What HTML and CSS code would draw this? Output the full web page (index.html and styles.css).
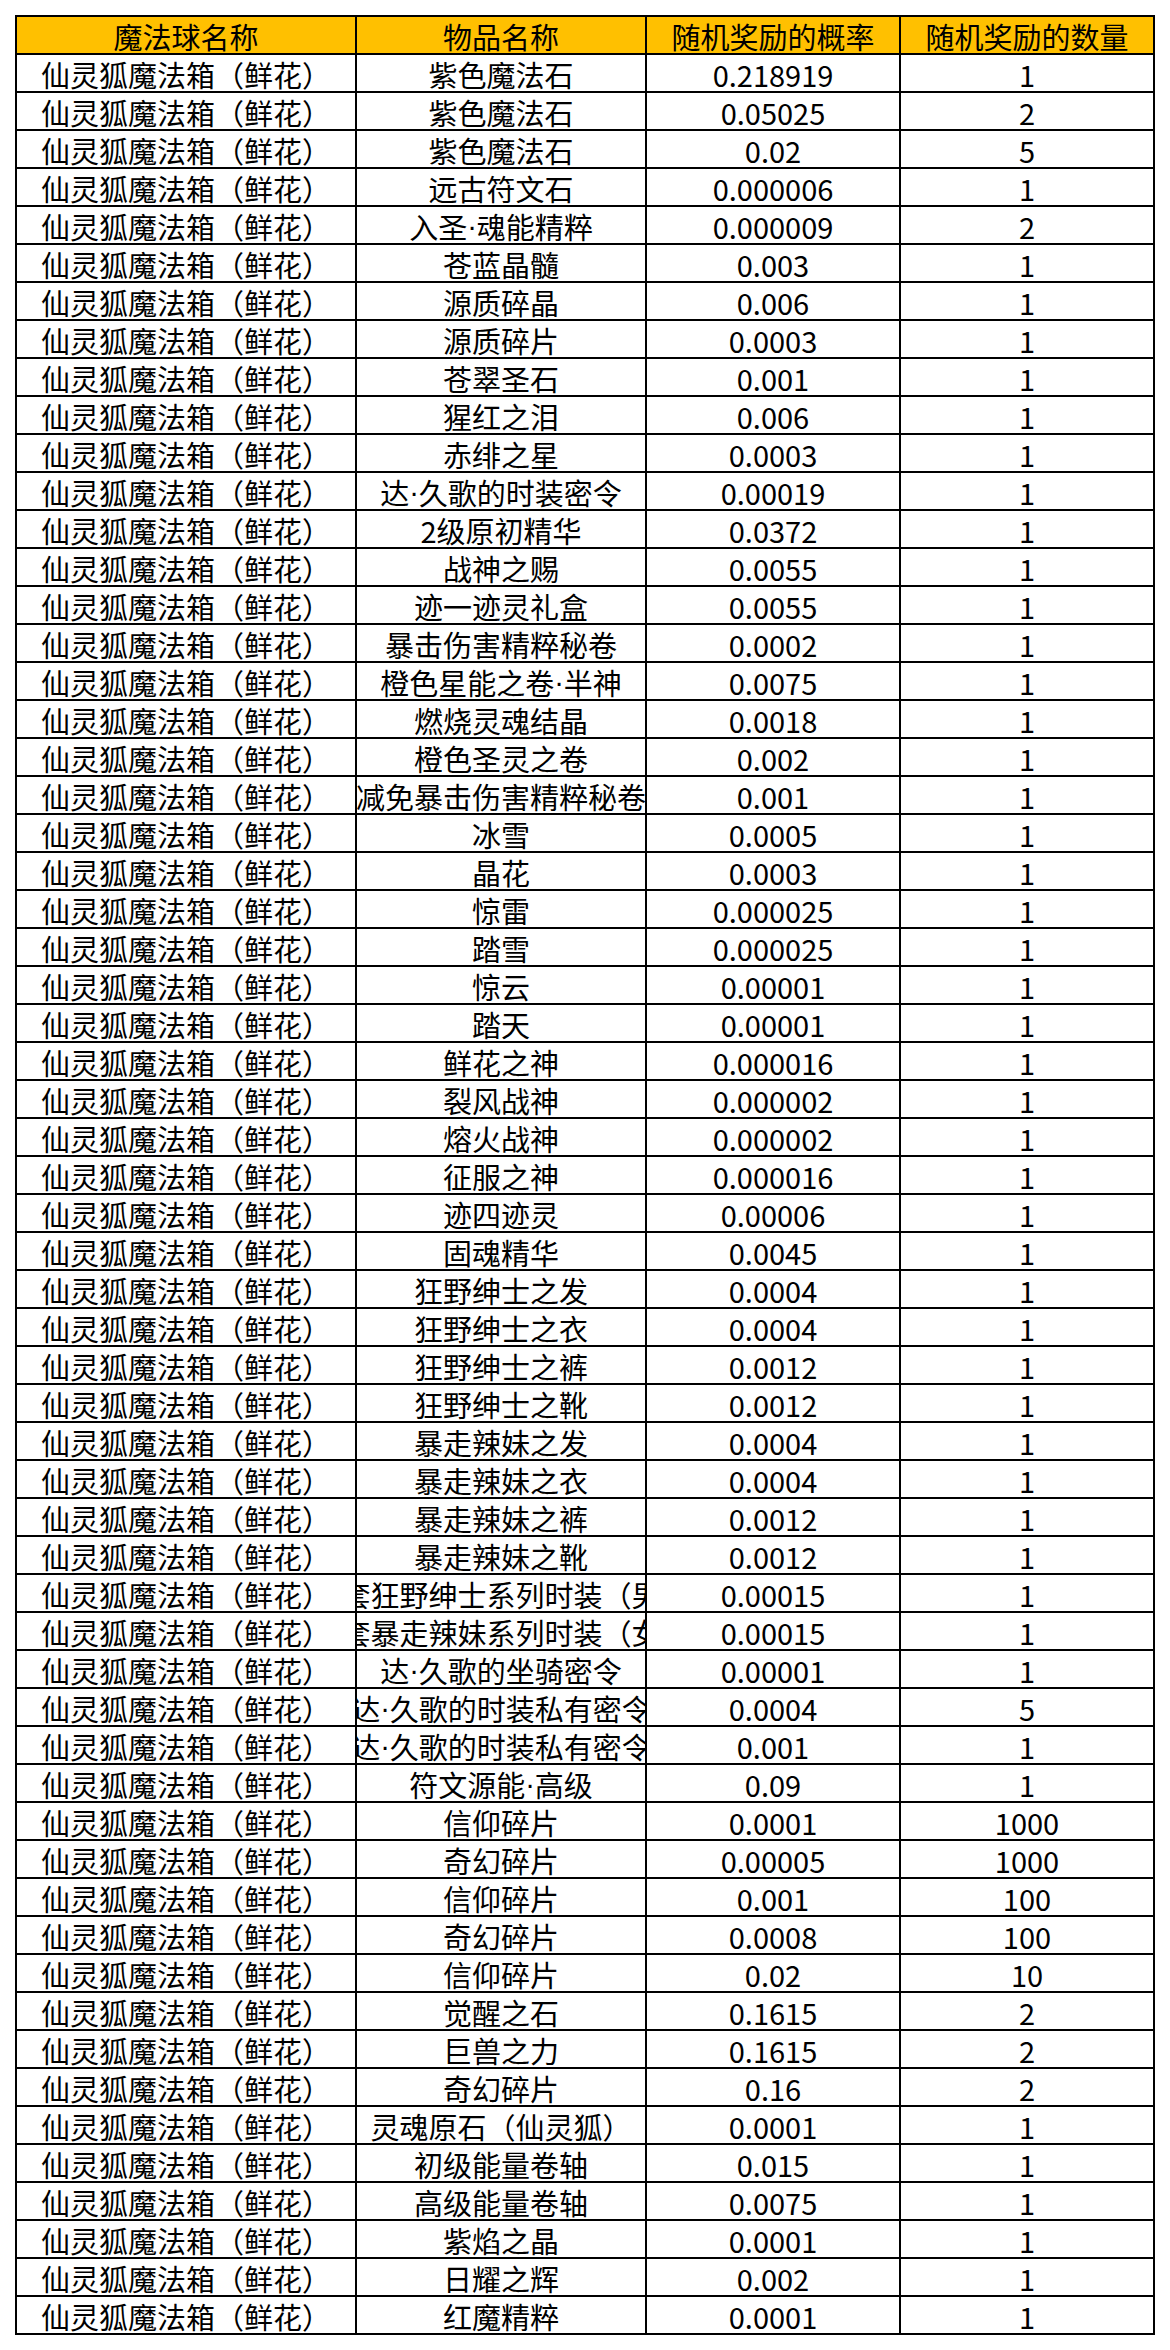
FILE: index.html
```html
<!DOCTYPE html>
<html lang="zh-CN">
<head>
<meta charset="utf-8">
<title>魔法球奖励概率</title>
<link rel="stylesheet" href="styles.css">
</head>
<body>
<table class="sheet">
<colgroup><col class="c1"><col class="c2"><col class="c3"><col class="c4"></colgroup>
<thead>
<tr class="head"><th><div class="cell">魔法球名称</div></th><th><div class="cell">物品名称</div></th><th><div class="cell">随机奖励的概率</div></th><th><div class="cell">随机奖励的数量</div></th></tr>
</thead>
<tbody>
<tr><td><div class="cell">仙灵狐魔法箱（鲜花）</div></td><td><div class="cell">紫色魔法石</div></td><td><div class="cell">0.218919</div></td><td><div class="cell">1</div></td></tr>
<tr><td><div class="cell">仙灵狐魔法箱（鲜花）</div></td><td><div class="cell">紫色魔法石</div></td><td><div class="cell">0.05025</div></td><td><div class="cell">2</div></td></tr>
<tr><td><div class="cell">仙灵狐魔法箱（鲜花）</div></td><td><div class="cell">紫色魔法石</div></td><td><div class="cell">0.02</div></td><td><div class="cell">5</div></td></tr>
<tr><td><div class="cell">仙灵狐魔法箱（鲜花）</div></td><td><div class="cell">远古符文石</div></td><td><div class="cell">0.000006</div></td><td><div class="cell">1</div></td></tr>
<tr><td><div class="cell">仙灵狐魔法箱（鲜花）</div></td><td><div class="cell">入圣<span class="dot">·</span>魂能精粹</div></td><td><div class="cell">0.000009</div></td><td><div class="cell">2</div></td></tr>
<tr><td><div class="cell">仙灵狐魔法箱（鲜花）</div></td><td><div class="cell">苍蓝晶髓</div></td><td><div class="cell">0.003</div></td><td><div class="cell">1</div></td></tr>
<tr><td><div class="cell">仙灵狐魔法箱（鲜花）</div></td><td><div class="cell">源质碎晶</div></td><td><div class="cell">0.006</div></td><td><div class="cell">1</div></td></tr>
<tr><td><div class="cell">仙灵狐魔法箱（鲜花）</div></td><td><div class="cell">源质碎片</div></td><td><div class="cell">0.0003</div></td><td><div class="cell">1</div></td></tr>
<tr><td><div class="cell">仙灵狐魔法箱（鲜花）</div></td><td><div class="cell">苍翠圣石</div></td><td><div class="cell">0.001</div></td><td><div class="cell">1</div></td></tr>
<tr><td><div class="cell">仙灵狐魔法箱（鲜花）</div></td><td><div class="cell">猩红之泪</div></td><td><div class="cell">0.006</div></td><td><div class="cell">1</div></td></tr>
<tr><td><div class="cell">仙灵狐魔法箱（鲜花）</div></td><td><div class="cell">赤绯之星</div></td><td><div class="cell">0.0003</div></td><td><div class="cell">1</div></td></tr>
<tr><td><div class="cell">仙灵狐魔法箱（鲜花）</div></td><td><div class="cell">达<span class="dot">·</span>久歌的时装密令</div></td><td><div class="cell">0.00019</div></td><td><div class="cell">1</div></td></tr>
<tr><td><div class="cell">仙灵狐魔法箱（鲜花）</div></td><td><div class="cell">2级原初精华</div></td><td><div class="cell">0.0372</div></td><td><div class="cell">1</div></td></tr>
<tr><td><div class="cell">仙灵狐魔法箱（鲜花）</div></td><td><div class="cell">战神之赐</div></td><td><div class="cell">0.0055</div></td><td><div class="cell">1</div></td></tr>
<tr><td><div class="cell">仙灵狐魔法箱（鲜花）</div></td><td><div class="cell">迹一迹灵礼盒</div></td><td><div class="cell">0.0055</div></td><td><div class="cell">1</div></td></tr>
<tr><td><div class="cell">仙灵狐魔法箱（鲜花）</div></td><td><div class="cell">暴击伤害精粹秘卷</div></td><td><div class="cell">0.0002</div></td><td><div class="cell">1</div></td></tr>
<tr><td><div class="cell">仙灵狐魔法箱（鲜花）</div></td><td><div class="cell">橙色星能之卷<span class="dot">·</span>半神</div></td><td><div class="cell">0.0075</div></td><td><div class="cell">1</div></td></tr>
<tr><td><div class="cell">仙灵狐魔法箱（鲜花）</div></td><td><div class="cell">燃烧灵魂结晶</div></td><td><div class="cell">0.0018</div></td><td><div class="cell">1</div></td></tr>
<tr><td><div class="cell">仙灵狐魔法箱（鲜花）</div></td><td><div class="cell">橙色圣灵之卷</div></td><td><div class="cell">0.002</div></td><td><div class="cell">1</div></td></tr>
<tr><td><div class="cell">仙灵狐魔法箱（鲜花）</div></td><td><div class="cell over">减免暴击伤害精粹秘卷</div></td><td><div class="cell">0.001</div></td><td><div class="cell">1</div></td></tr>
<tr><td><div class="cell">仙灵狐魔法箱（鲜花）</div></td><td><div class="cell">冰雪</div></td><td><div class="cell">0.0005</div></td><td><div class="cell">1</div></td></tr>
<tr><td><div class="cell">仙灵狐魔法箱（鲜花）</div></td><td><div class="cell">晶花</div></td><td><div class="cell">0.0003</div></td><td><div class="cell">1</div></td></tr>
<tr><td><div class="cell">仙灵狐魔法箱（鲜花）</div></td><td><div class="cell">惊雷</div></td><td><div class="cell">0.000025</div></td><td><div class="cell">1</div></td></tr>
<tr><td><div class="cell">仙灵狐魔法箱（鲜花）</div></td><td><div class="cell">踏雪</div></td><td><div class="cell">0.000025</div></td><td><div class="cell">1</div></td></tr>
<tr><td><div class="cell">仙灵狐魔法箱（鲜花）</div></td><td><div class="cell">惊云</div></td><td><div class="cell">0.00001</div></td><td><div class="cell">1</div></td></tr>
<tr><td><div class="cell">仙灵狐魔法箱（鲜花）</div></td><td><div class="cell">踏天</div></td><td><div class="cell">0.00001</div></td><td><div class="cell">1</div></td></tr>
<tr><td><div class="cell">仙灵狐魔法箱（鲜花）</div></td><td><div class="cell">鲜花之神</div></td><td><div class="cell">0.000016</div></td><td><div class="cell">1</div></td></tr>
<tr><td><div class="cell">仙灵狐魔法箱（鲜花）</div></td><td><div class="cell">裂风战神</div></td><td><div class="cell">0.000002</div></td><td><div class="cell">1</div></td></tr>
<tr><td><div class="cell">仙灵狐魔法箱（鲜花）</div></td><td><div class="cell">熔火战神</div></td><td><div class="cell">0.000002</div></td><td><div class="cell">1</div></td></tr>
<tr><td><div class="cell">仙灵狐魔法箱（鲜花）</div></td><td><div class="cell">征服之神</div></td><td><div class="cell">0.000016</div></td><td><div class="cell">1</div></td></tr>
<tr><td><div class="cell">仙灵狐魔法箱（鲜花）</div></td><td><div class="cell">迹四迹灵</div></td><td><div class="cell">0.00006</div></td><td><div class="cell">1</div></td></tr>
<tr><td><div class="cell">仙灵狐魔法箱（鲜花）</div></td><td><div class="cell">固魂精华</div></td><td><div class="cell">0.0045</div></td><td><div class="cell">1</div></td></tr>
<tr><td><div class="cell">仙灵狐魔法箱（鲜花）</div></td><td><div class="cell">狂野绅士之发</div></td><td><div class="cell">0.0004</div></td><td><div class="cell">1</div></td></tr>
<tr><td><div class="cell">仙灵狐魔法箱（鲜花）</div></td><td><div class="cell">狂野绅士之衣</div></td><td><div class="cell">0.0004</div></td><td><div class="cell">1</div></td></tr>
<tr><td><div class="cell">仙灵狐魔法箱（鲜花）</div></td><td><div class="cell">狂野绅士之裤</div></td><td><div class="cell">0.0012</div></td><td><div class="cell">1</div></td></tr>
<tr><td><div class="cell">仙灵狐魔法箱（鲜花）</div></td><td><div class="cell">狂野绅士之靴</div></td><td><div class="cell">0.0012</div></td><td><div class="cell">1</div></td></tr>
<tr><td><div class="cell">仙灵狐魔法箱（鲜花）</div></td><td><div class="cell">暴走辣妹之发</div></td><td><div class="cell">0.0004</div></td><td><div class="cell">1</div></td></tr>
<tr><td><div class="cell">仙灵狐魔法箱（鲜花）</div></td><td><div class="cell">暴走辣妹之衣</div></td><td><div class="cell">0.0004</div></td><td><div class="cell">1</div></td></tr>
<tr><td><div class="cell">仙灵狐魔法箱（鲜花）</div></td><td><div class="cell">暴走辣妹之裤</div></td><td><div class="cell">0.0012</div></td><td><div class="cell">1</div></td></tr>
<tr><td><div class="cell">仙灵狐魔法箱（鲜花）</div></td><td><div class="cell">暴走辣妹之靴</div></td><td><div class="cell">0.0012</div></td><td><div class="cell">1</div></td></tr>
<tr><td><div class="cell">仙灵狐魔法箱（鲜花）</div></td><td><div class="cell over">全套狂野绅士系列时装（男）</div></td><td><div class="cell">0.00015</div></td><td><div class="cell">1</div></td></tr>
<tr><td><div class="cell">仙灵狐魔法箱（鲜花）</div></td><td><div class="cell over">全套暴走辣妹系列时装（女）</div></td><td><div class="cell">0.00015</div></td><td><div class="cell">1</div></td></tr>
<tr><td><div class="cell">仙灵狐魔法箱（鲜花）</div></td><td><div class="cell">达<span class="dot">·</span>久歌的坐骑密令</div></td><td><div class="cell">0.00001</div></td><td><div class="cell">1</div></td></tr>
<tr><td><div class="cell">仙灵狐魔法箱（鲜花）</div></td><td><div class="cell over">达<span class="dot">·</span>久歌的时装私有密令</div></td><td><div class="cell">0.0004</div></td><td><div class="cell">5</div></td></tr>
<tr><td><div class="cell">仙灵狐魔法箱（鲜花）</div></td><td><div class="cell over">达<span class="dot">·</span>久歌的时装私有密令</div></td><td><div class="cell">0.001</div></td><td><div class="cell">1</div></td></tr>
<tr><td><div class="cell">仙灵狐魔法箱（鲜花）</div></td><td><div class="cell">符文源能<span class="dot">·</span>高级</div></td><td><div class="cell">0.09</div></td><td><div class="cell">1</div></td></tr>
<tr><td><div class="cell">仙灵狐魔法箱（鲜花）</div></td><td><div class="cell">信仰碎片</div></td><td><div class="cell">0.0001</div></td><td><div class="cell">1000</div></td></tr>
<tr><td><div class="cell">仙灵狐魔法箱（鲜花）</div></td><td><div class="cell">奇幻碎片</div></td><td><div class="cell">0.00005</div></td><td><div class="cell">1000</div></td></tr>
<tr><td><div class="cell">仙灵狐魔法箱（鲜花）</div></td><td><div class="cell">信仰碎片</div></td><td><div class="cell">0.001</div></td><td><div class="cell">100</div></td></tr>
<tr><td><div class="cell">仙灵狐魔法箱（鲜花）</div></td><td><div class="cell">奇幻碎片</div></td><td><div class="cell">0.0008</div></td><td><div class="cell">100</div></td></tr>
<tr><td><div class="cell">仙灵狐魔法箱（鲜花）</div></td><td><div class="cell">信仰碎片</div></td><td><div class="cell">0.02</div></td><td><div class="cell">10</div></td></tr>
<tr><td><div class="cell">仙灵狐魔法箱（鲜花）</div></td><td><div class="cell">觉醒之石</div></td><td><div class="cell">0.1615</div></td><td><div class="cell">2</div></td></tr>
<tr><td><div class="cell">仙灵狐魔法箱（鲜花）</div></td><td><div class="cell">巨兽之力</div></td><td><div class="cell">0.1615</div></td><td><div class="cell">2</div></td></tr>
<tr><td><div class="cell">仙灵狐魔法箱（鲜花）</div></td><td><div class="cell">奇幻碎片</div></td><td><div class="cell">0.16</div></td><td><div class="cell">2</div></td></tr>
<tr><td><div class="cell">仙灵狐魔法箱（鲜花）</div></td><td><div class="cell">灵魂原石（仙灵狐）</div></td><td><div class="cell">0.0001</div></td><td><div class="cell">1</div></td></tr>
<tr><td><div class="cell">仙灵狐魔法箱（鲜花）</div></td><td><div class="cell">初级能量卷轴</div></td><td><div class="cell">0.015</div></td><td><div class="cell">1</div></td></tr>
<tr><td><div class="cell">仙灵狐魔法箱（鲜花）</div></td><td><div class="cell">高级能量卷轴</div></td><td><div class="cell">0.0075</div></td><td><div class="cell">1</div></td></tr>
<tr><td><div class="cell">仙灵狐魔法箱（鲜花）</div></td><td><div class="cell">紫焰之晶</div></td><td><div class="cell">0.0001</div></td><td><div class="cell">1</div></td></tr>
<tr><td><div class="cell">仙灵狐魔法箱（鲜花）</div></td><td><div class="cell">日耀之辉</div></td><td><div class="cell">0.002</div></td><td><div class="cell">1</div></td></tr>
<tr><td><div class="cell">仙灵狐魔法箱（鲜花）</div></td><td><div class="cell">红魔精粹</div></td><td><div class="cell">0.0001</div></td><td><div class="cell">1</div></td></tr>
</tbody>
</table>
</body>
</html>
```
FILE: styles.css
```css
html, body {
  margin: 0;
  padding: 0;
  background: #ffffff;
}

body {
  padding: 15px 0 0 15px;
  font-family: "Noto Sans CJK SC", "Noto Sans", sans-serif;
  color: #000000;
}

.sheet {
  border-collapse: collapse;
  table-layout: fixed;
  width: 1140px;
  border: 2px solid #000000;
}

.c1 { width: 340px; }
.c2 { width: 290px; }
.c3 { width: 254px; }
.c4 { width: 254px; }

.sheet th,
.sheet td {
  border: 2px solid #000000;
  padding: 0;
  height: 36px;
  font-weight: normal;
  vertical-align: bottom;
}

.head th {
  background: #ffc000;
}

.cell {
  display: flex;
  justify-content: center;
  white-space: nowrap;
  font-size: 29px;
  line-height: 33px;
}

.cell.over {
  overflow-x: clip;
  overflow-y: visible;
}

.dot {
  font-family: "Liberation Sans", "Noto Sans", sans-serif;
}
```
